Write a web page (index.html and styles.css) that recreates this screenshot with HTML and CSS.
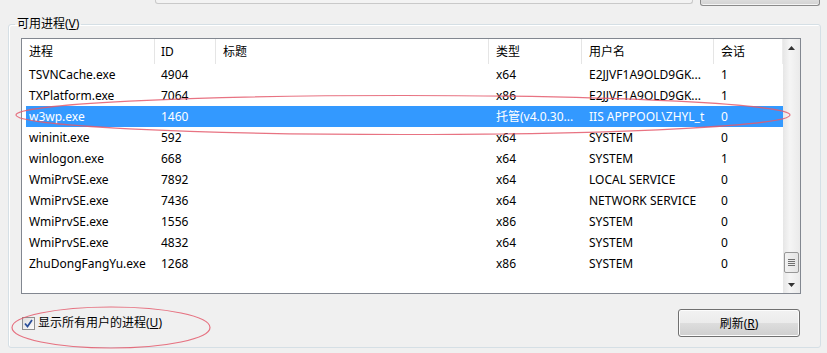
FILE: index.html
```html
<!DOCTYPE html>
<html lang="zh-CN">
<head>
<meta charset="utf-8">
<title>附加到进程</title>
<link rel="stylesheet" href="styles.css">
</head>
<body>
<div class="page">
  <div class="top-strip">
    <div class="top-box"></div>
    <div class="top-button"></div>
  </div>
  <fieldset class="group">
    <legend class="group-label">可用进程(<u>V</u>)</legend>
    <div class="list">
      <div class="list-main">
        <div class="header">
          <div class="hcell c1">进程</div>
          <div class="hcell c2">ID</div>
          <div class="hcell c3">标题</div>
          <div class="hcell c4">类型</div>
          <div class="hcell c5">用户名</div>
          <div class="hcell c6">会话</div>
        </div>
        <div class="rows">
          <div class="row"><span>TSVNCache.exe</span><span>4904</span><span></span><span>x64</span><span>E2JJVF1A9OLD9GK...</span><span>1</span></div>
          <div class="row"><span>TXPlatform.exe</span><span>7064</span><span></span><span>x86</span><span>E2JJVF1A9OLD9GK...</span><span>1</span></div>
          <div class="row selected"><span>w3wp.exe</span><span>1460</span><span></span><span>托管(v4.0.30...</span><span>IIS APPPOOL\ZHYL_t</span><span>0</span></div>
          <div class="row"><span>wininit.exe</span><span>592</span><span></span><span>x64</span><span>SYSTEM</span><span>0</span></div>
          <div class="row"><span>winlogon.exe</span><span>668</span><span></span><span>x64</span><span>SYSTEM</span><span>1</span></div>
          <div class="row"><span>WmiPrvSE.exe</span><span>7892</span><span></span><span>x64</span><span>LOCAL SERVICE</span><span>0</span></div>
          <div class="row"><span>WmiPrvSE.exe</span><span>7436</span><span></span><span>x64</span><span>NETWORK SERVICE</span><span>0</span></div>
          <div class="row"><span>WmiPrvSE.exe</span><span>1556</span><span></span><span>x86</span><span>SYSTEM</span><span>0</span></div>
          <div class="row"><span>WmiPrvSE.exe</span><span>4832</span><span></span><span>x64</span><span>SYSTEM</span><span>0</span></div>
          <div class="row"><span>ZhuDongFangYu.exe</span><span>1268</span><span></span><span>x86</span><span>SYSTEM</span><span>0</span></div>
        </div>
      </div>
      <div class="scrollbar">
        <div class="arrow">
          <svg width="7" height="4" viewBox="0 0 7 4"><path d="M0 4 L3.5 0 L7 4 Z" fill="#333"/></svg>
        </div>
        <div class="track">
          <div class="thumb">
            <svg width="7" height="8" viewBox="0 0 7 8"><path d="M0 0.5H7M0 2.5H7M0 4.5H7M0 6.5H7" stroke="#6f6f6f" stroke-width="1"/></svg>
          </div>
        </div>
        <div class="arrow">
          <svg width="7" height="4" viewBox="0 0 7 4"><path d="M0 0 L3.5 4 L7 0 Z" fill="#333"/></svg>
        </div>
      </div>
    </div>
    <div class="bottom-row">
      <label class="check">
        <span class="box">
          <svg width="9" height="9" viewBox="0 0 9 9"><path d="M1 4.5 L3.5 7.5 L8 1" fill="none" stroke="#2b4f9a" stroke-width="1.8"/></svg>
        </span>
        <span class="check-text">显示所有用户的进程(<u>U</u>)</span>
      </label>
      <button class="btn" type="button">刷新(<u>R</u>)</button>
    </div>
  </fieldset>
  <svg class="marks" width="827" height="353" viewBox="0 0 827 353">
    <ellipse cx="403" cy="115" rx="387" ry="19.5" fill="none" stroke="#e45a6c" stroke-width="1.2" opacity="0.85"/>
    <ellipse cx="111" cy="327.5" rx="99" ry="20.5" fill="none" stroke="#e45a6c" stroke-width="1.2" opacity="0.85"/>
  </svg>
</div>
</body>
</html>
```

FILE: styles.css
```css
* { box-sizing: border-box; }
html, body { margin: 0; padding: 0; }
body {
  background: #f0f0f0;
  font-family: "Noto Sans", "Noto Sans CJK SC", sans-serif;
  font-size: 12px;
  color: #000;
  width: 827px;
  height: 353px;
  overflow: hidden;
}
.page { position: relative; width: 827px; height: 353px; }

.top-strip { height: 5px; display: flex; }
.top-box {
  margin-left: 155px;
  width: 538px;
  height: 4px;
  border: 1px solid #c9c9c9;
  border-top: none;
  border-radius: 0 0 3px 3px;
  background: #f3f3f3;
}
.top-button {
  margin-left: 7px;
  width: 120px;
  height: 6px;
  border: 1px solid #8a8a8a;
  border-top: none;
  border-radius: 0 0 3px 3px;
  background: linear-gradient(#dcdcdc, #d2d2d2);
  box-shadow: inset 0 -1px 0 #f4f4f4;
}

.group {
  margin: 11px 0 0 8px;
  width: 813px;
  height: 332px;
  border: 1px solid #d5dfe5;
  border-radius: 3px;
  box-shadow: inset 1px 1px 0 #fff;
  padding: 6px 19px 0 12px;
  min-width: 0;
}
.group-label {
  margin-left: -6px;
  padding: 0 2px;
  line-height: 16px;
  height: 16px;
}

.list {
  display: flex;
  width: 780px;
  height: 256px;
  border: 1px solid #828790;
  background: #fff;
}
.list-main { flex: 1; overflow: hidden; }

.header {
  display: grid;
  grid-template-columns: 133px 61px 273px 93px 132px 69px;
  height: 25px;
}
.hcell {
  border-right: 1px solid #e5e5e5;
  padding-left: 7px;
  line-height: 25px;
  white-space: nowrap;
  overflow: hidden;
}
.hcell.c2 { padding-left: 6px; }
.hcell.c6 { border-right-color: #ececec; }

.row {
  margin-left: 4px;
  display: grid;
  grid-template-columns: 129px 61px 273px 93px 132px 69px;
  height: 21px;
  line-height: 21px;
  white-space: nowrap;
}
.row span { overflow: hidden; padding-left: 7px; }
.row span:first-child { padding-left: 3px; }
.row span:nth-child(2) { padding-left: 6px; }
.row.selected { background: #3399ff; color: #fff; }

.scrollbar {
  width: 17px;
  display: flex;
  flex-direction: column;
  background: linear-gradient(90deg, #e6e6e6, #f5f5f5 40%, #eaeaea);
}
.arrow {
  height: 17px;
  display: flex;
  align-items: center;
  justify-content: center;
}
.track {
  flex: 1;
  display: flex;
  flex-direction: column;
  justify-content: flex-end;
  padding: 0 1px 3px 1px;
}
.thumb {
  height: 21px;
  border: 1px solid #979797;
  border-radius: 2px;
  background: linear-gradient(90deg, #f2f2f2, #e4e4e4);
  display: flex;
  align-items: center;
  justify-content: center;
}

.bottom-row {
  margin-top: 15px;
  display: flex;
  align-items: center;
  justify-content: space-between;
  padding-left: 1px;
  padding-right: 1px;
  width: 780px;
}
.check { display: flex; align-items: center; gap: 3px; }
.box {
  width: 13px;
  height: 13px;
  border: 1px solid #8e8f8f;
  background: linear-gradient(135deg, #dcdcdc, #fdfdfd);
  display: flex;
  align-items: center;
  justify-content: center;
}
.check-text { line-height: 16px; }
.btn {
  width: 122px;
  height: 28px;
  border: 1px solid #707070;
  border-radius: 3px;
  background: linear-gradient(#f2f2f2 0%, #ebebeb 50%, #dddddd 51%, #cfcfcf 100%);
  box-shadow: inset 0 0 0 1px #fcfcfc;
  font-family: "Noto Sans", "Noto Sans CJK SC", sans-serif;
  font-size: 12px;
  color: #000;
  padding: 0;
}

.marks { position: absolute; left: 0; top: 0; pointer-events: none; }
```
